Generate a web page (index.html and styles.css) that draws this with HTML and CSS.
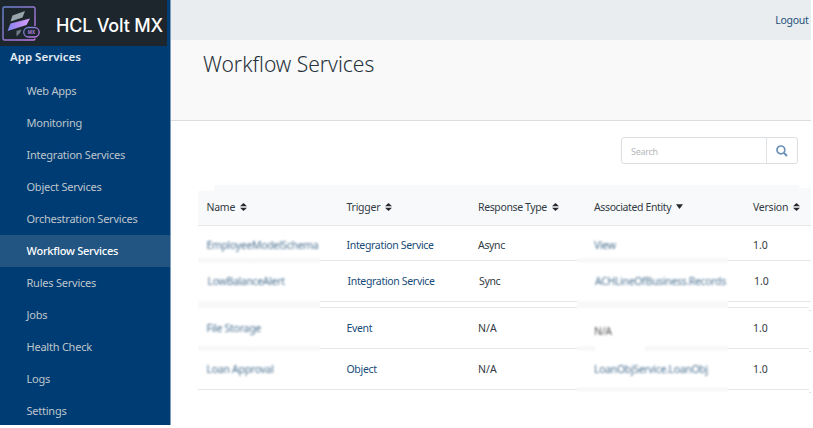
FILE: index.html
```html
<!DOCTYPE html>
<html lang="en">
<head>
<meta charset="utf-8">
<title>Workflow Services</title>
<link rel="stylesheet" href="styles.css">
</head>
<body>
<svg class="defs" width="0" height="0" aria-hidden="true">
  <symbol id="sort" viewBox="0 0 7 8"><path d="M3.5 0 7 3.3H0zM0 4.7h7L3.5 8z"/></symbol>
  <symbol id="down" viewBox="0 0 7 8"><path d="M0 1.3h7L3.5 6z"/></symbol>
</svg>
<div class="app">
  <aside class="sidebar">
    <div class="brand">
      <svg class="logo" width="40" height="42" viewBox="0 0 40 42" fill="none">
        <defs>
          <linearGradient id="edge" x1="0" y1="0" x2="1" y2="1"><stop stop-color="#6684d0"/><stop offset=".5" stop-color="#9278d0"/><stop offset="1" stop-color="#c77bea"/></linearGradient>
          <linearGradient id="bolt" x1="0" y1="0" x2="1" y2="0"><stop stop-color="#7d83f0"/><stop offset=".5" stop-color="#b38bf2"/><stop offset="1" stop-color="#d7a0fb"/></linearGradient>
        </defs>
        <path d="M35 26V8.5Q35 7 33.500 7H4.500Q3 7 3 8.500V38.500Q3 40 4.500 40H33.500Q35 40 35 38.500" stroke="url(#edge)" stroke-width="1.4"/>
        <path d="M12.500 15.500 25 11 22.500 17.500 10.500 21.500z" fill="#99a5ad"/>
        <path d="M10.500 23.500 30 18.500 26.500 25 7.500 31z" fill="url(#bolt)"/>
        <path d="M16.500 31 21.500 29.500 20 33 16.500 36.500z" fill="#6f7b84"/>
        <rect x="23.700" y="27.500" width="15.500" height="9.500" rx="4.700" fill="#1d2630" stroke="url(#edge)" stroke-width="1.300"/>
        <text x="31.500" y="34.300" text-anchor="middle" class="logo-tag">MX</text>
      </svg>
      <span class="brand-name">HCL Volt MX</span>
    </div>
    <h2 class="group">App Services</h2>
    <nav class="nav">
      <a>Web Apps</a>
      <a>Monitoring</a>
      <a>Integration Services</a>
      <a>Object Services</a>
      <a>Orchestration Services</a>
      <a class="active">Workflow Services</a>
      <a>Rules Services</a>
      <a>Jobs</a>
      <a>Health Check</a>
      <a>Logs</a>
      <a>Settings</a>
    </nav>
  </aside>
  <main class="main">
    <header class="topbar"><a>Logout</a></header>
    <section class="heading"><h1>Workflow Services</h1></section>
    <div class="search">
      <span class="search-field">Search</span>
      <span class="search-button"><svg width="12" height="12" viewBox="0 0 12 12" fill="none" stroke="#6992b8"><circle cx="4.900" cy="4.900" r="3.900" stroke-width="1.700"/><path d="M7.800 7.800 11 11" stroke-width="2"/></svg></span>
    </div>
    <div class="table">
      <div class="row head">
        <div>Name <svg><use href="#sort"/></svg></div>
        <div>Trigger <svg><use href="#sort"/></svg></div>
        <div class="wide">Response Type <svg><use href="#sort"/></svg></div>
        <div class="wide">Associated Entity <svg><use href="#down"/></svg></div>
        <div>Version <svg><use href="#sort"/></svg></div>
      </div>
      <div class="row first">
        <div class="hidden"><span>EmployeeModelSchema</span></div><div class="link">Integration Service</div><div>Async</div><div class="hidden"><span>View</span></div><div class="number">1.0</div>
      </div>
      <div class="row second">
        <div class="hidden"><span>LowBalanceAlert</span></div><div class="link">Integration Service</div><div>Sync</div><div class="hidden"><span>ACHLineOfBusiness.Records</span></div><div class="number">1.0</div>
      </div>
      <div class="row spacer"><div class="hidden"></div><div></div><div></div><div class="hidden"></div><div class="cut"></div></div>
      <div class="row">
        <div class="hidden"><span class="loose">File Storage</span></div><div class="link">Event</div><div class="number">N/A</div><div class="hidden gap"><span class="plain">N/A</span></div><div class="cut number">1.0</div>
      </div>
      <div class="row">
        <div class="hidden sharp"><span class="loose">Loan Approval</span></div><div class="link">Object</div><div class="number">N/A</div><div class="hidden"><span>LoanObjService.LoanObj</span></div><div class="cut number">1.0</div>
      </div>
    </div>
  </main>
</div>
</body>
</html>
```
FILE: styles.css
```css
* { box-sizing: border-box; }
body { margin: 0; background: #fff; font: 10.5px/14px "Noto Sans", sans-serif; color: #333b43; }
h1, h2 { margin: 0; }
.defs { position: absolute; }
.app { display: flex; width: 811px; height: 425px; }
.sidebar { width: 171px; flex: none; background: #003c74; border-right: 1px solid #7f9db9; }
.brand { display: flex; width: 167px; height: 46px; background: #1d262d; }
.logo { flex: none; }
.logo-tag { font: bold 4.5px "Noto Sans", sans-serif; fill: #a97cd9; }
.brand-name { margin: 14px 0 0 16px; font: 500 18px/24px Inter, sans-serif; color: #fff; white-space: nowrap; letter-spacing: -.2px; }
.group { height: 29px; padding: 4px 0 0 10px; font-size: 11.5px; line-height: 14px; font-weight: 600; color: #e4ebf1; }
.nav a { display: flex; align-items: center; height: 32px; padding-left: 26.5px; font-size: 11px; letter-spacing: -.23px; color: #bdc6cc; }
.nav .active { background: #225582; color: #fff; font-weight: 500; }
.main { width: 640px; display: flex; flex-direction: column; }
.topbar { height: 40px; background: #e9edf0; display: flex; justify-content: flex-end; padding: 13px 2.5px 0 0; color: #245078; letter-spacing: -.3px; }
.heading { height: 81px; background: #f9f9f9; border-bottom: 1px solid #dcdddd; padding: 10px 0 0 32px; }
.heading h1 { font-size: 21px; line-height: 28px; font-weight: 300; color: #27313a; }
.search { display: flex; width: 177px; height: 27px; margin: 16px 0 0 450px; border: 1px solid #dcdfe1; border-radius: 3px; }
.search-field { flex: 1; padding: 7px 0 0 9px; font-size: 9px; line-height: 14px; letter-spacing: -.3px; color: #b4b8bc; }
.search-button { width: 31px; border-left: 1px solid #dfe2e4; display: flex; align-items: center; justify-content: center; }
.table { margin: 21px 0 0 27px; width: 613px; letter-spacing: -.33px; }
.row { display: grid; grid-template-columns: 122px 151px 106px 151px 83px; height: 41px; }
.row > div { position: relative; display: flex; align-items: center; border-bottom: 1px solid #e6e7e8; white-space: nowrap; padding: 0 0 1px 26.5px; }
.row > div:nth-child(1) { padding-left: 8.5px; }
.row > div:nth-child(3) { padding-left: 7px; }
.row > div:nth-child(4) { padding-left: 17px; }
.row > div:nth-child(5) { padding-left: 25px; }
.row .number { letter-spacing: 0; }
.head { background: linear-gradient(#fff, #fff) 0 0 / 16px 6px no-repeat, linear-gradient(#fff, #fff) 100% 0 / 12px 3px no-repeat, #f8f9fb; }
.head > div { padding-top: 4px; gap: 5px; letter-spacing: -.25px; }
.head .wide { letter-spacing: -.38px; }
.head svg { width: 7px; height: 8px; fill: #252a2e; }
.first { height: 35px; }
.first > div { padding-top: 5px; }
.second > div { text-indent: 1px; }
.row .link { color: #174c79; }
.spacer { height: 6px; }
.row .hidden { border-bottom-color: transparent; }
.hidden::after { content: ""; position: absolute; left: 0; right: 0; bottom: -4px; height: 7px; background: linear-gradient(transparent, #f8f8f8 35%, #f8f8f8 65%, transparent); }
.spacer .hidden::after { height: 11px; bottom: -3px; }
.second .hidden::after { display: none; }
.hidden.sharp { border-bottom-color: #e6e7e8; }
.hidden.sharp::after { display: none; }
.hidden.gap::after { background: linear-gradient(#fff, #fff) 18px 0 / 50px 7px no-repeat, linear-gradient(transparent, #f8f8f8 35%, #f8f8f8 65%, transparent); }
.hidden span { color: #507594; filter: blur(1.2px); }
.hidden .loose { letter-spacing: -.28px; }
.hidden .plain { color: #555; position: relative; top: 3px; }
.row .cut { border-bottom: 0; padding-bottom: 2px; }
.cut::after { content: ""; position: absolute; left: 0; right: 2px; bottom: 0; height: 1px; background: #e6e7e8; }
.cut::before { content: ""; position: absolute; right: 0; bottom: -3px; width: 2px; height: 1px; background: #dfe1e3; }
```
